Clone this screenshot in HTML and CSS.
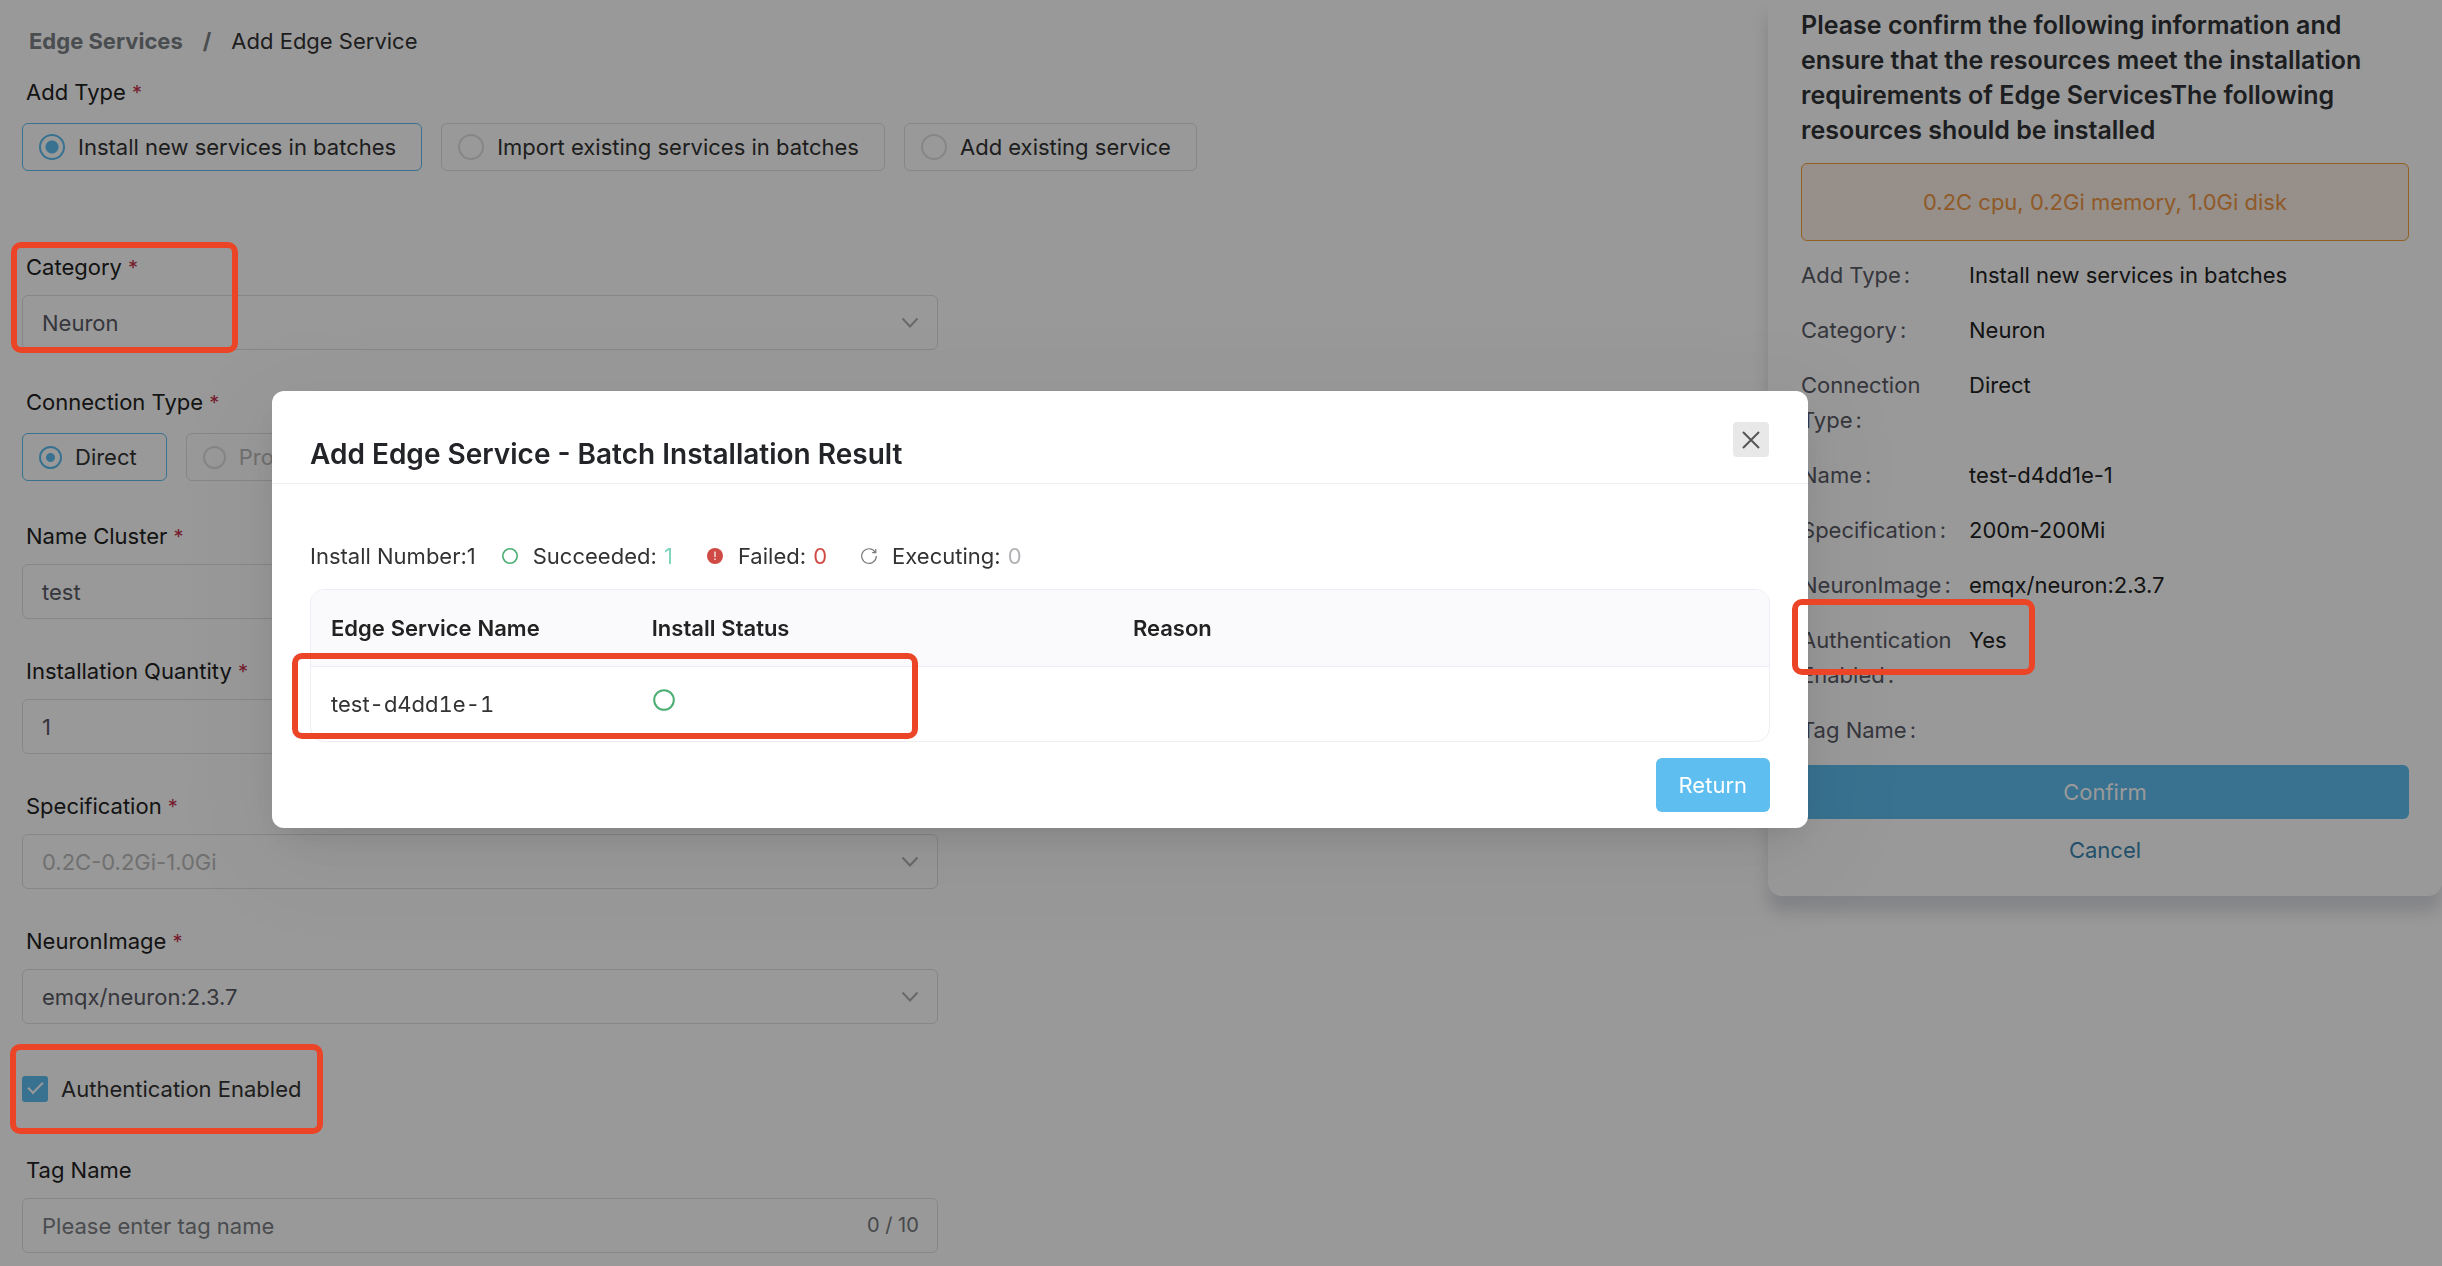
FILE: index.html
```html
<!DOCTYPE html>
<html lang="en">
<head>
<meta charset="utf-8">
<meta name="viewport" content="width=device-width, initial-scale=1">
<title>Add Edge Service</title>
<link rel="stylesheet" href="styles.css">
</head>
<body>
<div class="page">
  <main class="main">
    <nav class="breadcrumb" aria-label="Breadcrumb">
      <a class="breadcrumb-link" href="#">Edge Services</a>
      <span class="breadcrumb-sep">/</span>
      <span>Add Edge Service</span>
    </nav>
    <form class="form">
      <fieldset class="field field-spaced">
        <legend class="label">Add Type <span class="required">*</span></legend>
        <div class="radios">
          <label class="radio"><input type="radio" name="add-type" checked>Install new services in batches</label>
          <label class="radio"><input type="radio" name="add-type">Import existing services in batches</label>
          <label class="radio"><input type="radio" name="add-type">Add existing service</label>
        </div>
      </fieldset>
      <div class="field marked">
        <label class="label" for="category">Category <span class="required">*</span></label>
        <div class="control">
          <select id="category" class="input"><option>Neuron</option></select>
          <svg class="chevron" viewBox="0 0 18 12"><path d="M1.500 1.500 9 9.500l7.500-8"/></svg>
        </div>
        <span class="mark mark-category"></span>
      </div>
      <fieldset class="field">
        <legend class="label">Connection Type <span class="required">*</span></legend>
        <div class="radios">
          <label class="radio radio-compact"><input type="radio" name="connection" checked>Direct</label>
          <label class="radio radio-compact radio-disabled"><input type="radio" name="connection" disabled>Proxy</label>
        </div>
      </fieldset>
      <div class="field">
        <label class="label" for="cluster">Name Cluster <span class="required">*</span></label>
        <div class="control"><input id="cluster" class="input" type="text" value="test"></div>
      </div>
      <div class="field">
        <label class="label" for="quantity">Installation Quantity <span class="required">*</span></label>
        <div class="control"><input id="quantity" class="input" type="text" value="1"></div>
      </div>
      <div class="field">
        <label class="label" for="spec">Specification <span class="required">*</span></label>
        <div class="control">
          <select id="spec" class="input input-muted"><option>0.2C-0.2Gi-1.0Gi</option></select>
          <svg class="chevron" viewBox="0 0 18 12"><path d="M1.500 1.500 9 9.500l7.500-8"/></svg>
        </div>
      </div>
      <div class="field">
        <label class="label" for="image">NeuronImage <span class="required">*</span></label>
        <div class="control">
          <select id="image" class="input"><option>emqx/neuron:2.3.7</option></select>
          <svg class="chevron" viewBox="0 0 18 12"><path d="M1.500 1.500 9 9.500l7.500-8"/></svg>
        </div>
      </div>
      <div class="field marked">
        <label class="checkbox"><input type="checkbox" checked>Authentication Enabled</label>
        <span class="mark mark-auth"></span>
      </div>
      <div class="field">
        <label class="label" for="tag">Tag Name</label>
        <div class="control">
          <input id="tag" class="input" type="text" placeholder="Please enter tag name">
          <span class="counter">0 / 10</span>
        </div>
      </div>
    </form>
  </main>

  <aside class="panel">
    <h2 class="panel-title">Please confirm the following information and ensure that the resources meet the installation requirements of Edge ServicesThe following resources should be installed</h2>
    <p class="notice">0.2C cpu, 0.2Gi memory, 1.0Gi disk</p>
    <dl class="summary">
      <dt>Add Type<span class="colon">:</span></dt><dd>Install new services in batches</dd>
      <dt>Category<span class="colon">:</span></dt><dd>Neuron</dd>
      <dt>Connection Type<span class="colon">:</span></dt><dd>Direct</dd>
      <dt>Name<span class="colon">:</span></dt><dd>test-d4dd1e-1</dd>
      <dt>Specification<span class="colon">:</span></dt><dd>200m-200Mi</dd>
      <dt>NeuronImage<span class="colon">:</span></dt><dd>emqx/neuron:2.3.7</dd>
      <dt class="marked">Authentication Enabled<span class="colon">:</span><span class="mark mark-yes"></span></dt><dd>Yes</dd>
      <dt>Tag Name<span class="colon">:</span></dt><dd></dd>
    </dl>
    <button class="button button-block" type="button">Confirm</button>
    <button class="button-link" type="button">Cancel</button>
  </aside>
</div>

<div class="overlay"></div>
<section class="modal" role="dialog" aria-labelledby="modal-title">
  <header class="modal-header">
    <h1 id="modal-title" class="modal-title">Add Edge Service - Batch Installation Result</h1>
    <button class="close" type="button" aria-label="Close">
      <svg viewBox="0 0 18 18"><path d="M1 1l16 16M17 1 1 17"/></svg>
    </button>
  </header>
  <div class="modal-body">
    <div class="stats">
      <span>Install Number:1</span>
      <span class="stat">
        <svg class="stat-icon" viewBox="0 0 18 18"><circle cx="9" cy="9" r="7.200" fill="none" stroke="#4cae74" stroke-width="1.600"/></svg>
        <span>Succeeded: <span class="count count-ok">1</span></span>
      </span>
      <span class="stat">
        <svg class="stat-icon" viewBox="0 0 18 18"><circle cx="9" cy="9" r="8" fill="#d04a45"/><path d="M9 4.500v5.500M9 11.500V13" stroke="#fff" stroke-width="1.200"/></svg>
        <span>Failed: <span class="count count-fail">0</span></span>
      </span>
      <span class="stat">
        <svg class="stat-icon" viewBox="0 0 18 18"><path d="M15.200 5.200A7.300 7.300 0 1 0 16.300 9M15.800 2v3.600h-3.600" fill="none" stroke="#77797c" stroke-width="1.200"/></svg>
        <span>Executing: <span class="count count-run">0</span></span>
      </span>
    </div>
    <div class="marked">
      <div class="table-frame">
        <table class="table">
          <colgroup><col class="col-name"><col class="col-status"><col></colgroup>
          <thead><tr><th>Edge Service Name</th><th>Install Status</th><th>Reason</th></tr></thead>
          <tbody><tr>
            <td>test-d4dd1e-1</td>
            <td><svg class="status-icon" viewBox="0 0 24 24"><circle cx="12" cy="12" r="9.800" fill="none" stroke="#4cae74" stroke-width="2"/></svg></td>
            <td></td>
          </tr></tbody>
        </table>
      </div>
      <span class="mark mark-row"></span>
    </div>
    <div class="modal-footer"><button class="button" type="button">Return</button></div>
  </div>
</section>
</body>
</html>
```
FILE: styles.css
```css
*, *::before, *::after { box-sizing: border-box; }

body {
  margin: 0;
  background: #fff;
  color: #333;
  font: 22px/32px Inter, "Liberation Sans", sans-serif;
}

h1, h2, p, dl, dd, fieldset { margin: 0; }
fieldset { padding: 0; border: 0; min-width: 0; }
legend { padding: 0; }
button, input, select { font: inherit; }
a { text-decoration: none; }

.page {
  display: flex;
  justify-content: space-between;
  align-items: flex-start;
}

/* Form */
.main { width: 37.5%; margin-left: 22px; }

.breadcrumb {
  display: flex;
  gap: 20px;
  padding: 25px 7px 19px;
}
.breadcrumb-link { color: #7c8186; font-weight: 700; }
.breadcrumb-sep { color: #7c8186; font-weight: 700; }

.field { margin-bottom: 36px; }
.field-spaced { margin-bottom: 77px; }
.field:last-child { margin-bottom: 0; }

.label {
  display: block;
  padding-left: 4px;
  margin-bottom: 12px;
  color: #222;
}
.required { color: #c4314b; font-size: 20px; line-height: 1; }

.control { position: relative; }
.input {
  display: block;
  width: 100%;
  height: 55px;
  padding: 0 19px;
  border: 1px solid #e0e0e2;
  border-radius: 6px;
  background: #fff;
  color: #5a5a66;
  appearance: none;
  outline: none;
}
.input::placeholder { color: #7c7f85; opacity: 1; }
.input-muted { color: #bbb; opacity: 1; }
.chevron {
  position: absolute;
  top: 22px;
  right: 19px;
  width: 18px;
  height: 12px;
  fill: none;
  stroke: #b0b0b4;
  stroke-width: 2;
}
.counter {
  position: absolute;
  top: 11px;
  right: 19px;
  color: #76797e;
  font-size: 20px;
}

.radios {
  display: flex;
  align-items: center;
  gap: 19px;
  height: 54px;
}
.radio {
  display: flex;
  flex: none;
  align-items: center;
  gap: 13px;
  height: 48px;
  padding: 0 25px 0 16px;
  border: 1px solid #e0e0e2;
  border-radius: 6px;
  white-space: nowrap;
}
.radio input {
  width: 26px;
  height: 26px;
  margin: 0;
  border: 2px solid #e0e0e2;
  border-radius: 50%;
  background: #fff;
  appearance: none;
}
.radio:has(:checked), .radio input:checked { border-color: #5ebef0; }
.radio input:checked { background: radial-gradient(circle, #5ebef0 6px, #fff 7px); }
.radio-compact { padding-right: 29px; }
.radio-compact input { width: 23px; height: 23px; }
.radio-compact input:checked { background: radial-gradient(circle, #5ebef0 4px, #fff 5px); }
.radio-disabled { color: #bbb; }

.checkbox {
  display: flex;
  align-items: center;
  gap: 13px;
  height: 58px;
}
.checkbox input {
  position: relative;
  width: 26px;
  height: 26px;
  margin: 0;
  border-radius: 3px;
  background: #5ebef0;
  appearance: none;
}
.checkbox input::after {
  content: "";
  position: absolute;
  left: 6px;
  top: 6px;
  width: 15px;
  height: 8px;
  border: solid #fff;
  border-width: 0 0 2px 2px;
  transform: rotate(-45deg);
}

/* Confirmation panel */
.panel {
  width: 27.6%;
  padding: 8px 33px 14px;
  border-radius: 0 0 14px 14px;
  background: #fff;
  box-shadow: 0 16px 16px rgba(60, 66, 100, .18);
}
.panel-title {
  color: #303236;
  font-size: 25px;
  font-weight: 600;
  line-height: 35px;
}
.notice {
  margin: 15px 0 17px;
  padding: 22px;
  border: 1px solid #f5a035;
  border-radius: 6px;
  background: #faeee6;
  color: #ee9744;
  text-align: center;
}
.summary {
  display: grid;
  grid-template-columns: 156px 1fr;
  gap: 20px 12px;
  margin-bottom: 17px;
  line-height: 35px;
}
.summary dt { color: #5a5a66; }
.summary dd { color: #222; }
.colon { margin-left: 3px; }

.button {
  height: 54px;
  padding: 0 23px;
  border: 0;
  border-radius: 6px;
  background: #5ebef0;
  color: #fff;
}
.button-block { display: block; width: 100%; }
.button-link {
  display: block;
  width: 100%;
  height: 60px;
  margin-top: 3px;
  padding: 0 0 5px;
  border: 0;
  background: none;
  color: #3b86b0;
}

/* Result dialog */
.overlay {
  position: fixed;
  inset: 0;
  background: rgba(0, 0, 0, .4);
}
.modal {
  position: absolute;
  top: 391px;
  left: 272px;
  width: 62.9%;
  border-radius: 12px;
  background: #fff;
  box-shadow: 0 12px 32px -12px rgba(0, 0, 0, .12), 0 18px 56px rgba(0, 0, 0, .05), 0 24px 96px 32px rgba(0, 0, 0, .03);
}
.modal-header {
  display: flex;
  justify-content: space-between;
  align-items: flex-start;
  padding: 31px 39px 11px 38px;
  border-bottom: 1px solid #ebeef2;
}
.modal-title {
  padding-top: 14px;
  color: #222428;
  font-size: 28px;
  font-weight: 600;
  line-height: 36px;
}
.close {
  display: grid;
  place-items: center;
  width: 36px;
  height: 35px;
  padding: 0;
  border: 0;
  border-radius: 4px;
  background: #e8e8e8;
}
.close svg {
  width: 18px;
  height: 18px;
  fill: none;
  stroke: #555;
  stroke-width: 2;
}
.modal-body { padding: 56px 38px 16px; }

.stats {
  display: flex;
  align-items: center;
  gap: 25px;
  margin-bottom: 17px;
}
.stat { display: flex; align-items: center; gap: 14px; }
.stat + .stat { margin-left: 8px; }
.stat-icon { width: 18px; height: 18px; }
.count { margin-left: 1px; }
.count-ok { color: #7fd6bd; }
.count-fail { color: #d04a45; }
.count-run { color: #b0b2b5; }

.table-frame {
  overflow: hidden;
  border: 1px solid #ebeef2;
  border-radius: 14px;
}
.table {
  width: 100%;
  border-collapse: collapse;
  table-layout: fixed;
  font-variant-numeric: tabular-nums;
}
.col-name { width: 22%; }
.col-status { width: 33%; }
.table th, .table td { height: 75px; padding: 0 20px; text-align: left; }
.table th {
  height: 76px;
  border-bottom: 1px solid #ebeef2;
  background: #fafafc;
  color: #222;
  font-weight: 600;
}
.status-icon { display: block; width: 24px; height: 24px; margin-bottom: 8px; }
.modal-footer { display: flex; justify-content: flex-end; margin-top: 16px; }

/* Highlight frames */
.marked { position: relative; }
.mark {
  position: absolute;
  z-index: 1;
  border: 6px solid #ec4427;
  border-radius: 10px;
  pointer-events: none;
}
.mark-category { top: -9px; left: -11px; width: 227px; height: 111px; }
.mark-auth { top: -16px; left: -12px; width: 313px; height: 90px; }
.mark-yes { top: -24px; left: -9px; width: 243px; height: 76px; }
.mark-row { top: 64px; left: -18px; width: 626px; height: 86px; }
```
